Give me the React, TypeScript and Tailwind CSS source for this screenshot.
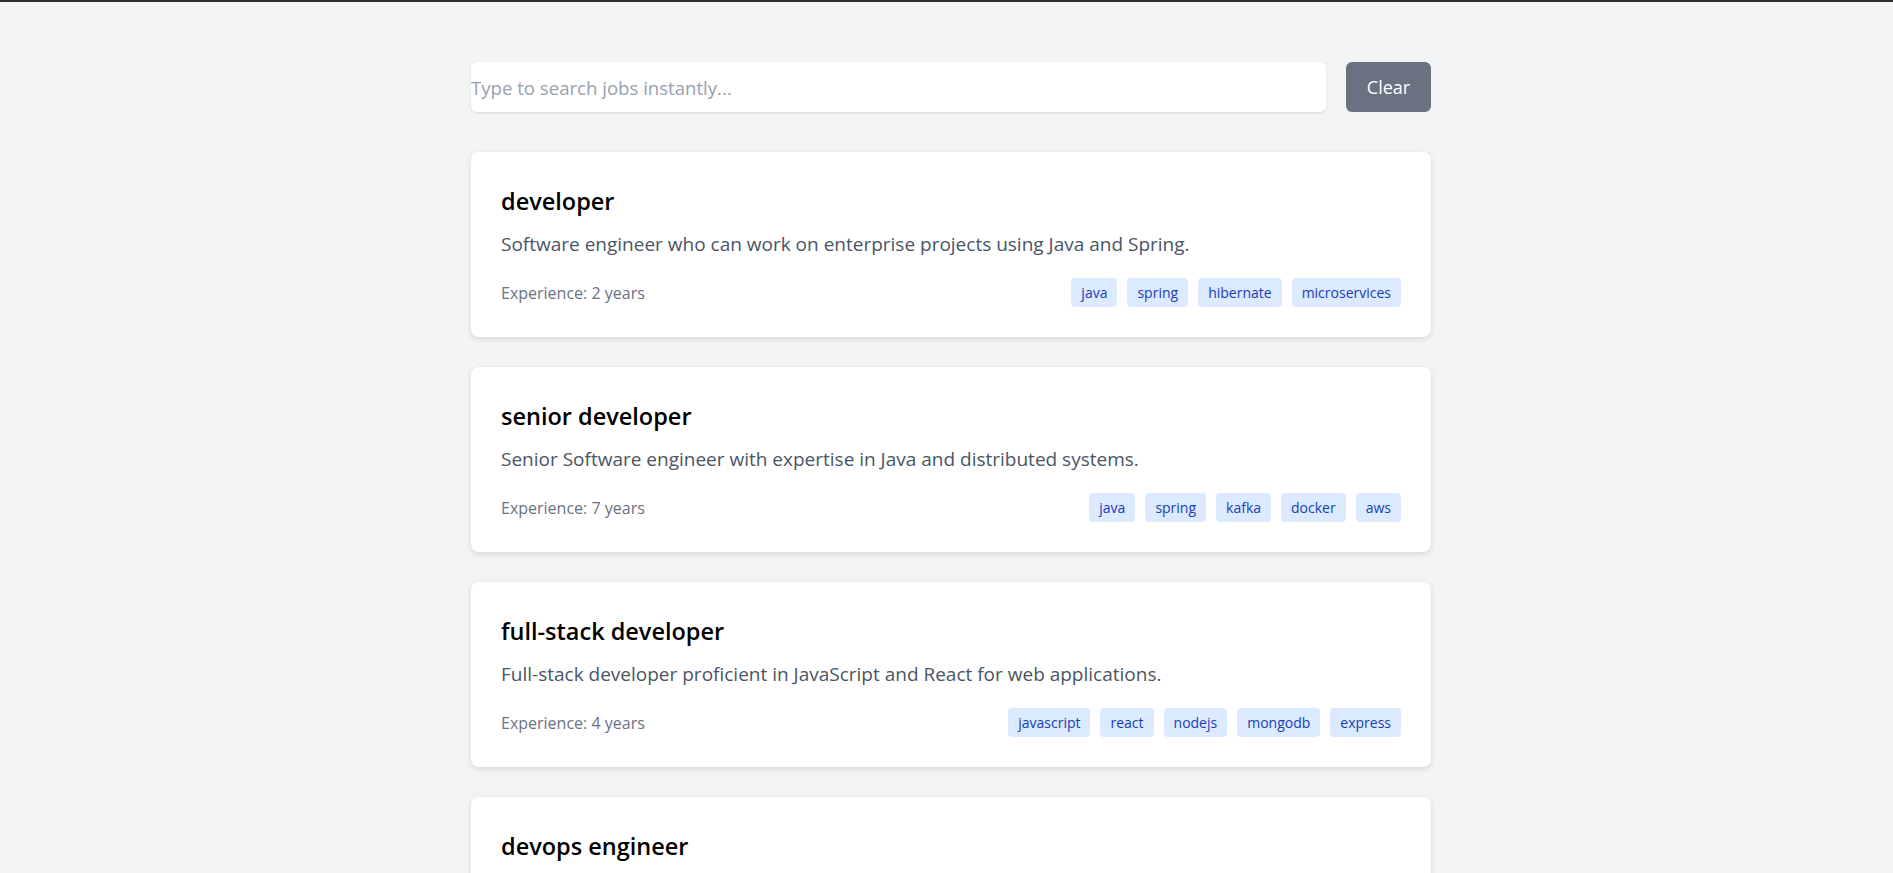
import React, { useState } from 'react';

type Job = {
    id: number;
    title: string;
    description: string;
    experience: number;
    skills: string[];
};

const JOBS: Job[] = [
    { id: 1, title: 'developer', description: 'Software engineer who can work on enterprise projects using Java and Spring.', experience: 2, skills: ['java', 'spring', 'hibernate', 'microservices'] },
    { id: 2, title: 'senior developer', description: 'Senior Software engineer with expertise in Java and distributed systems.', experience: 7, skills: ['java', 'spring', 'kafka', 'docker', 'aws'] },
    { id: 3, title: 'full-stack developer', description: 'Full-stack developer proficient in JavaScript and React for web applications.', experience: 4, skills: ['javascript', 'react', 'nodejs', 'mongodb', 'express'] },
    { id: 4, title: 'devops engineer', description: 'DevOps engineer experienced in CI/CD pipelines and cloud infrastructure.', experience: 5, skills: ['docker', 'kubernetes', 'jenkins', 'aws', 'terraform'] },
];

const JobCard: React.FC<{ job: Job }> = ({ job }) => (
    <div className="bg-white rounded-lg shadow-[0_2px_6px_rgba(0,0,0,0.12)] p-[30px]">
        <h2 className="text-[23.5px] leading-[38px] font-semibold text-black">{job.title}</h2>
        <p className="mt-[10px] text-[19px] leading-[28px] text-gray-600">{job.description}</p>
        <div className="mt-[20px] flex items-center justify-between">
            <span className="text-[16px] text-gray-500">Experience: {job.experience} years</span>
            <div className="flex gap-[10px]">
                {job.skills.map(s => (
                    <span key={s} className="px-[10px] py-[4px] text-[14px] leading-[21px] rounded bg-blue-100 text-blue-800">{s}</span>
                ))}
            </div>
        </div>
    </div>
);

export default function App() {
    const [query, setQuery] = useState('');
    const filtered = JOBS.filter(j => !query || (j.title + ' ' + j.description + ' ' + j.skills.join(' ')).toLowerCase().includes(query.toLowerCase()));

    return (
        <div className="min-h-screen bg-gray-100 border-t-2 border-[#2d2d2d] font-['Open_Sans',sans-serif]">
            <div className="flex justify-center pl-[9px] pt-[60px] pb-10">
                <div className="w-[960px]">
                    <div className="flex gap-[20px]">
                        <input
                            value={query}
                            onChange={e => setQuery(e.target.value)}
                            placeholder="Type to search jobs instantly..."
                            className="flex-1 h-[50px] rounded-md bg-white shadow-sm text-[18.6px] text-gray-800 placeholder:text-gray-400 outline-none"
                        />
                        <button onClick={() => setQuery('')} className="w-[85px] h-[50px] rounded-md bg-gray-500 text-white text-[18px]">Clear</button>
                    </div>
                    <div className="mt-[40px] flex flex-col gap-[30px]">
                        {filtered.map(j => <JobCard key={j.id} job={j} />)}
                    </div>
                </div>
            </div>
        </div>
    );
}
